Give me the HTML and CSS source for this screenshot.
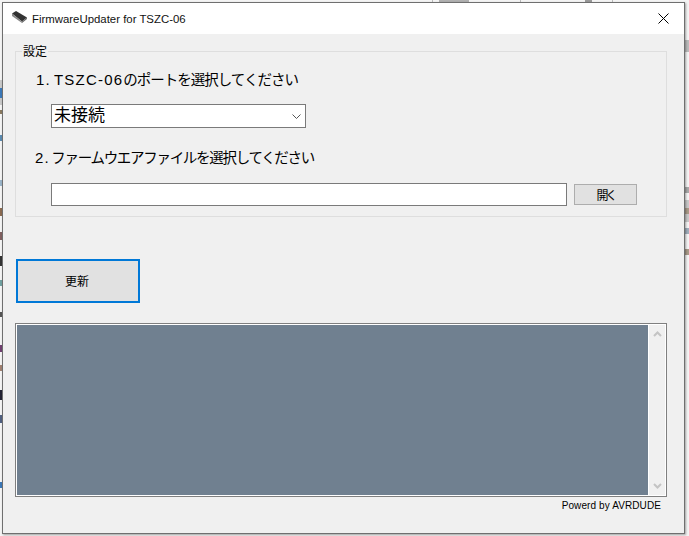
FILE: index.html
```html
<!DOCTYPE html>
<html lang="ja">
<head>
<meta charset="utf-8">
<title>FirmwareUpdater for TSZC-06</title>
<link rel="stylesheet" href="styles.css">
</head>
<body>
<svg class="backdrop" width="689" height="536" viewBox="0 0 689 536">
  <rect x="0" y="80" width="2" height="25" fill="#c8c8c8"/>
  <rect x="0" y="88" width="2" height="10" fill="#3b78b8"/>
  <rect x="0" y="110" width="2" height="4" fill="#8a7a60"/>
  <rect x="0" y="135" width="2" height="6" fill="#5a8ab0"/>
  <rect x="0" y="180" width="2" height="6" fill="#9ab4c8"/>
  <rect x="0" y="208" width="2" height="8" fill="#8a6a50"/>
  <rect x="0" y="232" width="2" height="8" fill="#806060"/>
  <rect x="0" y="256" width="2" height="10" fill="#333"/>
  <rect x="0" y="280" width="2" height="6" fill="#70a0a0"/>
  <rect x="0" y="312" width="2" height="5" fill="#555"/>
  <rect x="0" y="345" width="2" height="7" fill="#704070"/>
  <rect x="0" y="365" width="2" height="6" fill="#a08070"/>
  <rect x="0" y="390" width="2" height="10" fill="#223"/>
  <rect x="0" y="415" width="2" height="8" fill="#506080"/>
  <rect x="0" y="482" width="2" height="6" fill="#3b78b8"/>
  <rect x="432" y="0" width="1" height="2" fill="#bbb"/>
  <rect x="439" y="0" width="30" height="2" fill="#b0b0b0"/>
  <rect x="520" y="0" width="1" height="2" fill="#bbb"/>
  <rect x="585" y="0" width="7" height="2" fill="#999"/>
  <rect x="612" y="0" width="1" height="2" fill="#bbb"/>
  <rect x="685" y="40" width="4" height="12" fill="#bbb"/>
  <rect x="685" y="200" width="4" height="22" fill="#c8c8c8"/>
  <rect x="685" y="187" width="4" height="6" fill="#a8a8a8"/>
  <rect x="685" y="208" width="4" height="6" fill="#a89a88"/>
  <rect x="685" y="228" width="4" height="6" fill="#a0aebb"/>
  <rect x="685" y="249" width="4" height="6" fill="#a89a88"/>
</svg>
<div class="window">
  <header class="titlebar">
    <svg class="chip" width="17" height="14" viewBox="0 0 17 14">
      <path d="M1 3.500 5 1 16 7.500 11 11.500Z" fill="#333"/>
      <path d="M1 3.500 1 6 11 13 11 11.500Z" fill="#888"/>
      <path d="M11 11.500 11 13 16 9 16 7.500Z" fill="#666"/>
    </svg>
    <span class="title">FirmwareUpdater for TSZC-06</span>
    <svg class="close" width="11" height="11" viewBox="0 0 11 11">
      <path d="M.5.5 10.500 10.500M10.500.5.5 10.500" stroke="#000" stroke-width="1" fill="none"/>
    </svg>
  </header>
  <main class="client">
    <fieldset class="group">
      <legend class="legend">設定</legend>
      <div class="step step-one"><span class="latin">1. TSZC-06</span>のポートを選択してください</div>
      <div class="combo">
        <span class="combo-value">未接続</span>
        <svg class="chevron" width="9" height="5" viewBox="0 0 9 5">
          <path d="M.5.5 4.500 4.500 8.500.5" stroke="#555" fill="none"/>
        </svg>
      </div>
      <div class="step step-two"><span class="latin latin-num">2. </span>ファームウエアファイルを選択してください</div>
      <div class="file-row">
        <div class="path-box"></div>
        <div class="open-btn">開く</div>
      </div>
    </fieldset>
    <div class="update-btn">更新</div>
    <div class="log">
      <div class="log-fill"></div>
      <div class="scrollbar">
        <svg width="9" height="6" viewBox="0 0 9 6"><path d="M1 5 4.500 1.500 8 5" stroke="#c4c4c4" stroke-width="2" fill="none"/></svg>
        <svg width="9" height="6" viewBox="0 0 9 6"><path d="M1 1 4.500 4.500 8 1" stroke="#c4c4c4" stroke-width="2" fill="none"/></svg>
      </div>
    </div>
    <div class="credit">Powerd by AVRDUDE</div>
  </main>
</div>
</body>
</html>
```
FILE: styles.css
```css
html, body { margin: 0; padding: 0; }
body {
  position: relative;
  width: 689px;
  height: 536px;
  overflow: hidden;
  box-sizing: border-box;
  padding: 2px 0 0 2px;
  background: #f4f4f4;
  font-family: "Noto Sans CJK JP", "Liberation Sans", sans-serif;
  color: #000;
}
.backdrop { position: absolute; left: 0; top: 0; }
.window {
  position: relative;
  box-sizing: border-box;
  width: 683px;
  height: 532px;
  border: 1px solid #6f6f6f;
  background: #f0f0f0;
  box-shadow: 1px 1px 2px rgba(0,0,0,.35);
  display: flex;
  flex-direction: column;
}
.titlebar {
  height: 31px;
  flex: none;
  background: #fff;
  display: flex;
  align-items: center;
  padding: 0 15px 0 8px;
  box-sizing: border-box;
}
.chip { margin-right: 4px; margin-top: -3px; }
.title {
  font-family: "Liberation Sans", sans-serif;
  font-size: 11.4px;
  flex: 1;
  color: #111;
}
.client {
  flex: 1;
  display: flex;
  flex-direction: column;
  padding: 10px 17px 0 12px;
}
.group {
  margin: 0;
  padding: 0 0 10px 35px;
  height: 173px;
  box-sizing: border-box;
  border: 1px solid #dedede;
  min-width: 0;
}
.legend {
  margin-left: -29px;
  padding: 0 1px;
  font-size: 12px;
  line-height: 14px;
  height: 14px;
}
.step { font-size: 14.5px; line-height: 20px; white-space: nowrap; }
.step-one { margin: 11px 0 0 -15px; letter-spacing: -1px; }
.step-two { margin: 19px 0 0 -16px; letter-spacing: -1.3px; }
.latin {
  font-family: "Liberation Sans", sans-serif;
  font-size: 15px;
  letter-spacing: 1.2px;
  word-spacing: -2px;
}
.latin-num { word-spacing: -4px; }
.combo {
  box-sizing: border-box;
  width: 255px;
  height: 24px;
  margin-top: 14px;
  border: 1px solid #7a7a7a;
  background: #fff;
  display: flex;
  align-items: center;
  justify-content: space-between;
  padding: 0 4px 0 2px;
}
.combo-value { font-size: 17px; line-height: 20px; margin-top: -5px; }
.file-row { display: flex; align-items: center; margin-top: 15px; }
.path-box {
  box-sizing: border-box;
  width: 516px;
  height: 23px;
  border: 1px solid #7a7a7a;
  background: #fff;
}
.open-btn {
  box-sizing: border-box;
  width: 63px;
  height: 21px;
  margin-left: 7px;
  border: 1px solid #adadad;
  background: #e1e1e1;
  font-size: 12px;
  letter-spacing: -3px;
  line-height: 19px;
  text-align: center;
}
.update-btn {
  box-sizing: border-box;
  width: 124px;
  height: 44px;
  margin: 42px 0 0 1px;
  padding-right: 2px;
  border: 2px solid #0078d7;
  background: #e1e1e1;
  font-size: 12px;
  line-height: 40px;
  text-align: center;
}
.log {
  box-sizing: border-box;
  height: 174px;
  margin-top: 20px;
  border: 1px solid #7f7f7f;
  padding: 1px;
  background: #fff;
  display: flex;
}
.log-fill { flex: 1; background: #708090; }
.scrollbar {
  width: 16px;
  margin-left: 1px;
  background: #f0f0f0;
  display: flex;
  flex-direction: column;
  align-items: center;
  justify-content: space-between;
  padding: 6px 0;
  box-sizing: border-box;
}
.credit {
  font-family: "Liberation Sans", sans-serif;
  font-size: 10px;
  letter-spacing: .1px;
  line-height: 14px;
  padding-top: 2px;
  text-align: right;
  padding-right: 6px;
}
```
